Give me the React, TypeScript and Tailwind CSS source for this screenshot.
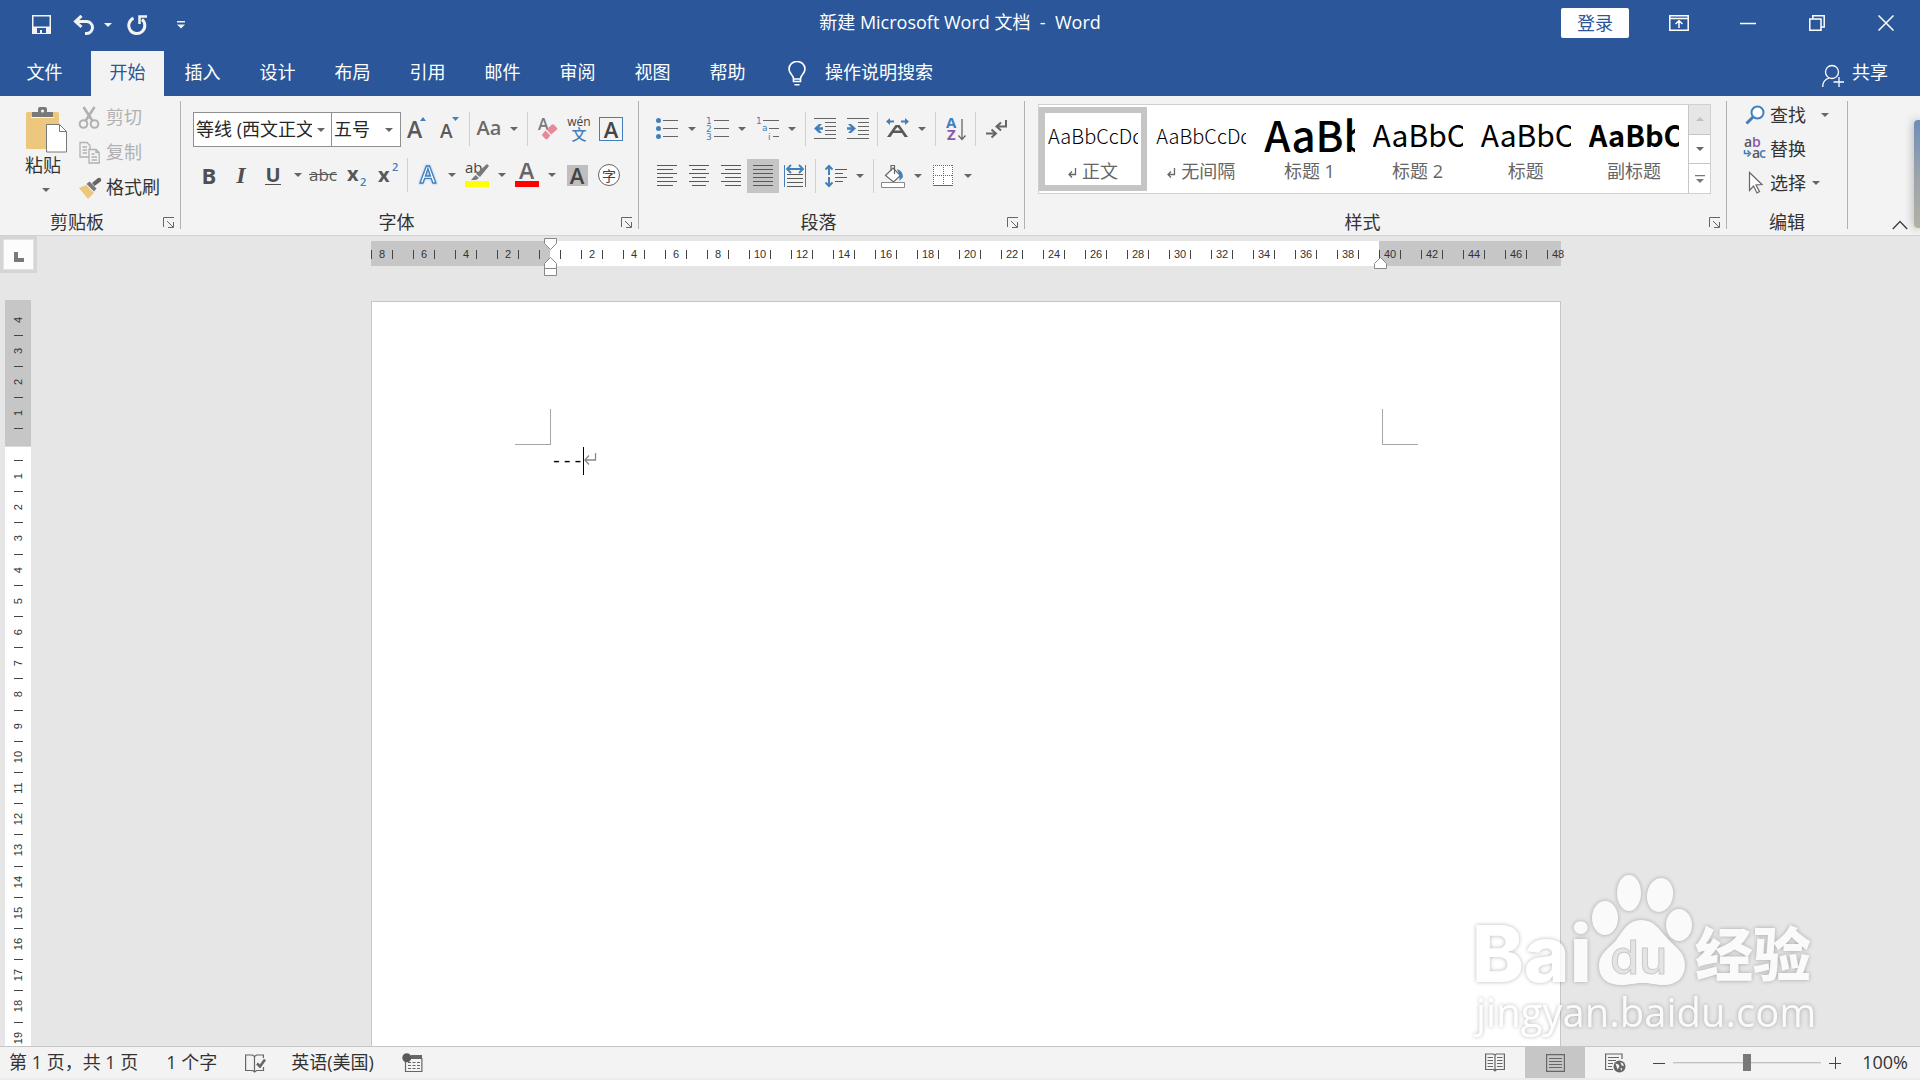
import type { ReactNode } from 'react';

const TABS = ['开始', '插入', '设计', '布局', '引用', '邮件', '审阅', '视图', '帮助'];

const STYLES = [
  { name: '正文', sample: 'AaBbCcDd', mark: true, font: 'text-[20px] leading-[46px] font-light' },
  { name: '无间隔', sample: 'AaBbCcDd', mark: true, font: 'text-[20px] leading-[46px] font-light' },
  { name: '标题 1', sample: 'AaBb', mark: false, font: 'text-[42px] leading-[42px] font-medium' },
  { name: '标题 2', sample: 'AaBbC', mark: false, font: 'text-[30px] leading-[42px] font-normal' },
  { name: '标题', sample: 'AaBbC', mark: false, font: 'text-[30px] leading-[42px] font-normal' },
  { name: '副标题', sample: 'AaBbC', mark: false, font: 'text-[29px] leading-[42px] font-bold' }
];

// one cell per character, every second one carries a number
const RULER_CELLS = Array.from({ length: 57 }, (_, i) => {
  const value = Math.abs(i - 8);
  return i % 2 === 0 && value !== 0 ? String(value) : '';
});

const TOP_MARGIN_LINES = [4, 3, 2, 1];
const BODY_LINES = Array.from({ length: 19 }, (_, i) => i + 1);

interface ToolProps {
  label: string;
  children: ReactNode;
  active?: boolean;
}

function Tool({ label, children, active = false }: ToolProps) {
  return (
    <button
      type="button"
      aria-label={label}
      className={`flex h-[34px] w-8 shrink-0 items-center justify-center ${active ? 'bg-[#c5c5c5]' : ''}`}
    >
      {children}
    </button>
  );
}

function Arrow({ className = 'fill-[#666]' }: { className?: string }) {
  return (
    <svg width="8" height="4" viewBox="0 0 8 4" className={className}>
      <path d="M0 0h8L4 4z" />
    </svg>
  );
}

function Caret({ label }: { label: string }) {
  return (
    <button type="button" aria-label={label} className="flex h-[34px] w-[18px] shrink-0 items-center justify-center">
      <Arrow />
    </button>
  );
}

function Separator() {
  return (
    <span className="flex w-2 shrink-0 justify-center self-stretch">
      <span className="w-px bg-[#cfcfcf]" />
    </span>
  );
}

function Icon({ children, size = 24 }: { children: ReactNode; size?: number }) {
  return (
    <svg width={size} height={size} viewBox="0 0 24 24" fill="none" className="shrink-0">
      {children}
    </svg>
  );
}

interface GroupProps {
  label: string;
  className: string;
  launcher?: boolean;
  children: ReactNode;
}

function Group({ label, className, launcher = true, children }: GroupProps) {
  return (
    <section className={`flex pt-[5px] ${className}`}>
      <div className="flex min-w-0 flex-1 flex-col">
        <div className="h-[108px]">{children}</div>
        <div className="flex h-[26px] items-center">
          <h2 className="flex-1 text-center text-[18px] leading-[24px] text-[#333]">{label}</h2>
          {launcher && (
            <button type="button" aria-label={`${label}设置`} className="w-[26px] pt-px pl-[9px]">
              <svg width="12" height="12" viewBox="0 0 12 12" fill="none" stroke="#666">
                <path d="M.5 10V.5H11M4 4l6 6M10.500 5v5.500H5" />
              </svg>
            </button>
          )}
        </div>
      </div>
      <span className="mb-[6px] w-px bg-[#b1b1b1]" />
    </section>
  );
}

function TitleBar() {
  return (
    <header className="grid h-[51px] grid-cols-[1fr_auto_1fr] text-white">
      <div className="flex items-center pb-[2px] pl-8">
        <button type="button" aria-label="保存">
          <svg width="20" height="20" viewBox="0 0 20 20">
            <path d="M0 0h19v19H0zM1.500 1.500v10h16v-10zM5 13v5h3v-3h2v3h4v-5z" fill="#f3f3f3" fillRule="evenodd" />
          </svg>
        </button>
        <button type="button" aria-label="撤消" className="ml-[21px]">
          <svg width="22" height="20" viewBox="0 0 22 20" fill="none" stroke="#f3f3f3" strokeWidth="3">
            <path d="M3 6.500h10.500a5.700 5.700 0 0 1 0 12H12" />
            <path d="M8.500.8L2.500 6.500l6 5.500" />
          </svg>
        </button>
        <button type="button" aria-label="撤消列表" className="ml-[9px]">
          <Arrow className="fill-[#f3f3f3]" />
        </button>
        <button type="button" aria-label="重复" className="ml-[15px]">
          <svg width="20" height="20" viewBox="0 0 20 20" fill="none" stroke="#f3f3f3" strokeWidth="3">
            <path d="M6.500 3.200a8 8 0 1 0 8.500 1.200" />
            <path d="M20 1.500h-7.500V9" strokeWidth="2.500" />
          </svg>
        </button>
        <button type="button" aria-label="自定义快速访问工具栏" className="ml-[30px]">
          <svg width="8" height="8" viewBox="0 0 8 8" fill="#f3f3f3">
            <path d="M0 0h8v1.500H0zM0 3.500h8l-4 4z" />
          </svg>
        </button>
      </div>
      <h1 className="text-[18px] leading-[44px] whitespace-pre">新建 Microsoft Word 文档  -  Word</h1>
      <div className="flex items-start justify-end">
        <button type="button" className="mt-2 mr-[15px] h-[30px] w-[68px] rounded-xs bg-white text-[18px] leading-[28px] text-[#2b579a]">
          登录
        </button>
        <button type="button" aria-label="功能区显示选项" className="flex h-[46px] w-[69px] items-center justify-center">
          <svg width="20" height="16" viewBox="0 0 20 16" fill="none" stroke="#fff" strokeWidth="1.500">
            <path d="M.8.8h18.400v14.400H.8zM1 3.500h18M10 13V6M6.500 9L10 5.700 13.500 9" />
          </svg>
        </button>
        <button type="button" aria-label="最小化" className="flex h-[46px] w-[69px] items-center justify-center">
          <svg width="16" height="16" viewBox="0 0 16 16" stroke="#fff" strokeWidth="1.500">
            <path d="M0 8.500h16" />
          </svg>
        </button>
        <button type="button" aria-label="向下还原" className="flex h-[46px] w-[69px] items-center justify-center">
          <svg width="16" height="16" viewBox="0 0 16 16" fill="none" stroke="#fff" strokeWidth="1.500">
            <path d="M.8 4h11.200v11.200H.8zM3.800 4V.8h11.400V12H12" />
          </svg>
        </button>
        <button type="button" aria-label="关闭" className="flex h-[46px] w-[69px] items-center justify-center">
          <svg width="16" height="16" viewBox="0 0 16 16" stroke="#fff" strokeWidth="1.500">
            <path d="M.5.500l15 15M15.500.500l-15 15" />
          </svg>
        </button>
      </div>
    </header>
  );
}

function TabRow() {
  return (
    <nav className="flex h-[45px] gap-0.5 text-[18px] leading-[40px] text-white">
      <button type="button" className="w-[89px] pb-1">文件</button>
      {TABS.map((tab, i) => (
        <button key={tab} type="button" className={`w-[73px] pb-1 ${i === 0 ? 'bg-[#f3f3f3] text-[#2b579a]' : ''}`}>
          {tab}
        </button>
      ))}
      <label className="ml-[22px] flex items-center gap-[19px]">
        <svg width="18" height="25" viewBox="0 0 18 25" fill="none" stroke="#fff" strokeWidth="1.600">
          <path d="M5.500 18c0-4-4.500-5-4.500-10a8 7.500 0 0 1 16 0c0 5-4.500 6-4.500 10zM5.500 18v2.500h7V18M6.500 23.700h5" />
        </svg>
        <input aria-label="操作说明搜索" placeholder="操作说明搜索" className="h-full w-[160px] bg-transparent pb-1 placeholder:text-white placeholder:opacity-100" />
      </label>
      <button type="button" className="ml-auto flex items-center gap-2 pr-8 pb-1">
        <svg width="22" height="24" viewBox="0 0 22 24" fill="none" stroke="#fff" strokeWidth="1.300" className="mt-2">
          <circle cx="10" cy="8" r="6.500" />
          <path d="M.7 23c0-5 3-8 6.500-9M17 13v10M11.500 18H22" />
        </svg>
        共享
      </button>
    </nav>
  );
}

function ClipboardGroup() {
  return (
    <Group label="剪贴板" className="w-[181px]">
      <div className="flex">
        <button type="button" className="flex w-[78px] flex-col items-start pt-[6px] pl-[25px] text-[18px] leading-[24px] text-[#333]">
          <svg width="42" height="46" viewBox="0 0 42 46">
            <rect x="1" y="5" width="33" height="37" rx="1.500" fill="#eec77f" />
            <path d="M7 5h6V2q0-2 2-2h5q2 0 2 2v3h6v5H7z" fill="#797979" />
            <circle cx="17.500" cy="4" r="1.600" fill="#f3f3f3" />
            <path d="M6 10.500h23" stroke="#f3f3f3" />
            <path d="M21.500 17.500h13l7 7v20.500h-20z" fill="#fff" stroke="#797979" />
            <path d="M34.500 17.500v7h7" fill="none" stroke="#797979" />
          </svg>
          粘贴
          <span className="mt-[11px] ml-[17px]">
            <Arrow />
          </span>
        </button>
        <div className="-mt-px flex flex-col text-[18px] leading-[35px] text-[#333]">
          <button type="button" disabled className="flex items-center gap-[6px] text-[#b1b1b1]">
            <svg width="22" height="24" viewBox="0 0 22 24" fill="none" stroke="#b1b1b1" strokeWidth="2">
              <circle cx="5.500" cy="18" r="3.800" />
              <circle cx="16.500" cy="18" r="3.800" />
              <path d="M5.500 1l9 14M16.500 1l-9 14" strokeWidth="2.600" />
            </svg>
            剪切
          </button>
          <button type="button" disabled className="flex items-center gap-[6px] text-[#b1b1b1]">
            <svg width="22" height="24" viewBox="0 0 22 24" fill="#f3f3f3" stroke="#b1b1b1" strokeWidth="1.300">
              <path d="M2 1.500h7l3 3V16H2zM4.500 6H9M4.500 9H9M4.500 12H9" />
              <path d="M11 8.500h7l3.200 3V22H11zM18 8.500v3h3M13.500 13h3M13.500 16h5.500M13.500 19h5.500" />
            </svg>
            复制
          </button>
          <button type="button" className="flex items-center gap-[6px]">
            <svg width="24" height="22" viewBox="0 0 24 22" className="-mr-[2px]">
              <path d="M1 11l7-3 8 8-6 6z" fill="#eec77f" />
              <path d="M8.500 7l3-2.500 7 7-2.500 3z" fill="#797979" />
              <path d="M14 6l6-5q2-1 3 1t-1 3l-5.500 4z" fill="#666" />
            </svg>
            格式刷
          </button>
        </div>
      </div>
    </Group>
  );
}

function FontGroup() {
  return (
    <Group label="字体" className="w-[458px]">
      <div className="flex flex-col gap-[12px] pt-[11px] pl-3">
        <div className="flex h-[34px]">
          <div className="flex h-[35px] w-[139px] items-center border border-[#8f8f8f] bg-white">
            <select aria-label="字体" className="h-full w-[118px] appearance-none overflow-hidden pl-[2px] text-[18px] text-[#262626]">
              <option>等线 (西文正文)</option>
            </select>
            <span className="pointer-events-none ml-[5px]">
              <Arrow />
            </span>
          </div>
          <div className="-ml-px flex h-[35px] w-[70px] items-center border border-[#8f8f8f] bg-white">
            <select aria-label="字号" className="h-full w-[53px] appearance-none pl-[2px] text-[18px] text-[#262626]">
              <option>五号</option>
            </select>
            <span className="pointer-events-none">
              <Arrow />
            </span>
          </div>
          <Tool label="增大字号">
            <svg width="22" height="24" viewBox="0 0 22 24" className="[font-family:'Open_Sans',sans-serif] font-semibold">
              <text x="1" y="21" fontSize="23" fill="#595959">A</text>
              <path d="M14 4l3-4 3 4z" fill="#437fbc" />
            </svg>
          </Tool>
          <Tool label="减小字号">
            <svg width="22" height="24" viewBox="0 0 22 24" className="[font-family:'Open_Sans',sans-serif] font-semibold">
              <text x="2" y="21" fontSize="19" fill="#595959">A</text>
              <path d="M14 0h7l-3.500 4z" fill="#437fbc" />
            </svg>
          </Tool>
          <Separator />
          <Tool label="更改大小写">
            <span className="pb-0.5 [font-family:'Open_Sans',sans-serif] text-[20px] font-semibold text-[#6a6a6a]">Aa</span>
          </Tool>
          <Caret label="大小写选项" />
          <Separator />
          <Tool label="清除所有格式">
            <Icon>
              <text x="3" y="13" fontSize="16" fill="#797979" className="[font-family:'Open_Sans',sans-serif] font-semibold">A</text>
              <path d="M11.500 12.500l5.500-5q1-.8 2 .2l3 3.200q.8 1-.2 1.900l-5.600 4.800z" fill="#e5899b" />
              <path d="M10.500 13.500l4.800 5-2.800 3.500q-1 .8-2 0L7.500 19q-.8-1 0-2z" fill="#e5899b" />
            </Icon>
          </Tool>
          <Tool label="拼音指南">
            <span className="flex flex-col items-center leading-none">
              <span className="[font-family:'Open_Sans',sans-serif] text-[12px] leading-[10px] text-[#444]">wén</span>
              <span className="text-[15px] leading-[15px] font-medium text-[#437fbc]">文</span>
            </span>
          </Tool>
          <Tool label="字符边框">
            <span className="flex size-6 items-center justify-center border border-[#437fbc] [font-family:'Open_Sans',sans-serif] text-[22px] leading-[22px] font-semibold text-[#444]">A</span>
          </Tool>
        </div>
        <div className="flex h-[34px] [font-family:'Open_Sans',sans-serif] text-[#505050]">
          <Tool label="加粗">
            <span className="text-[22px] font-bold">B</span>
          </Tool>
          <Tool label="倾斜">
            <span className="[font-family:'Liberation_Serif',serif] text-[24px] font-bold italic">I</span>
          </Tool>
          <Tool label="下划线">
            <span className="border-b border-[#505050] text-[20px] leading-[18px] font-bold">U</span>
          </Tool>
          <Caret label="下划线样式" />
          <Tool label="删除线">
            <span className="text-[17px] text-[#595959] line-through">abc</span>
          </Tool>
          <Tool label="下标">
            <Icon>
              <text x="4" y="18" fontSize="20" fill="#595959" className="font-bold">x</text>
              <text x="17" y="23" fontSize="11" fill="#437fbc" className="font-semibold">2</text>
            </Icon>
          </Tool>
          <Tool label="上标">
            <Icon>
              <text x="3" y="19" fontSize="20" fill="#595959" className="font-bold">x</text>
              <text x="17" y="8" fontSize="11" fill="#437fbc" className="font-semibold">2</text>
            </Icon>
          </Tool>
          <Separator />
          <Tool label="文本效果和版式">
            <Icon>
              <text x="5" y="20" fontSize="24" fill="#fff" stroke="#437fbc" strokeWidth="1.300" className="font-semibold [filter:drop-shadow(0_0_1px_#7db4e6)]">A</text>
            </Icon>
          </Tool>
          <Caret label="文本效果选项" />
          <Tool label="文本突出显示颜色">
            <Icon>
              <text x="0" y="10" fontSize="15" fill="#444">ab</text>
              <path d="M22 1l2 2-9 11-4-3zM10.500 12l3.500 3-3 2H6z" fill="#797979" />
              <path d="M0 18h24v6H0z" fill="#ff0" />
            </Icon>
          </Tool>
          <Caret label="突出显示选项" />
          <Tool label="字体颜色">
            <Icon>
              <text x="4" y="16" fontSize="23" fill="#666" className="font-semibold">A</text>
              <path d="M0 18h24v6H0z" fill="red" />
            </Icon>
          </Tool>
          <Caret label="字体颜色选项" />
          <Tool label="字符底纹">
            <span className="flex size-[21px] items-center justify-center bg-[#bfbfbf] text-[22px] leading-[21px] font-semibold text-[#444]">A</span>
          </Tool>
          <Tool label="带圈字符">
            <span className="flex size-[22px] items-center justify-center rounded-full border border-[#666] bg-white [font-family:'Noto_Sans_CJK_SC',sans-serif] text-[14px] leading-none text-[#444]">字</span>
          </Tool>
        </div>
      </div>
    </Group>
  );
}

function ParagraphGroup() {
  return (
    <Group label="段落" className="w-[386px]">
      <div className="flex flex-col gap-[13px] pt-[11px] pl-3">
        <div className="flex h-[34px]">
          <Tool label="项目符号">
            <Icon>
              <path d="M8 3.500h15M8 11.500h15M8 19.500h15" stroke="#666" />
              <path d="M1 3.500a2.500 2.500 0 1 1 5 0 2.500 2.500 0 0 1-5 0M1 11.500a2.500 2.500 0 1 1 5 0 2.500 2.500 0 0 1-5 0M1 19.500a2.500 2.500 0 1 1 5 0 2.500 2.500 0 0 1-5 0" fill="#437fbc" />
            </Icon>
          </Tool>
          <Caret label="项目符号库" />
          <Tool label="编号">
            <Icon>
              <path d="M9 3.500h15M9 11.500h15M9 19.500h15" stroke="#666" />
              <g fill="#437fbc" fontSize="9" className="[font-family:'DejaVu_Sans',sans-serif]">
                <text x="1" y="7">1</text>
                <text x="1" y="15">2</text>
                <text x="1" y="23">3</text>
              </g>
            </Icon>
          </Tool>
          <Caret label="编号库" />
          <Tool label="多级列表">
            <Icon>
              <path d="M8 3.500h16M14 11.500h10M18 19.500h6" stroke="#666" />
              <g fill="#437fbc" fontSize="9" className="[font-family:'DejaVu_Sans',sans-serif]">
                <text x="1" y="7">1</text>
                <text x="7" y="14">a</text>
                <text x="13" y="23">i</text>
              </g>
            </Icon>
          </Tool>
          <Caret label="多级列表库" />
          <Separator />
          <Tool label="减少缩进量">
            <Icon>
              <path d="M1 1.500h22M12 5.500h11M12 9.500h11M12 13.500h11M12 17.500h11M1 21.500h22" stroke="#666" />
              <path d="M1 11.500L6 7h3l-3 3.200h4v2.600H6L9 16H6z" fill="#437fbc" />
            </Icon>
          </Tool>
          <Tool label="增加缩进量">
            <Icon>
              <path d="M2 1.500h22M13 5.500h11M13 9.500h11M13 13.500h11M13 17.500h11M2 21.500h22" stroke="#666" />
              <path d="M11 11.500L6 7H3l3 3.200H2v2.600h4L3 16h3z" fill="#437fbc" />
            </Icon>
          </Tool>
          <Separator />
          <Tool label="中文版式">
            <Icon>
              <path d="M1 4.500L5 1v2.500h4v2H5V8zM24 4.500L20 1v2.500h-4v2h4V8z" fill="#437fbc" />
              <path d="M2 20L10.500 8h4L23 20h-3.500l-2.600-4H8.100l-2.600 4zM9.500 13.500h6L12.500 10z" fill="#595959" />
            </Icon>
          </Tool>
          <Caret label="中文版式选项" />
          <Separator />
          <Tool label="排序">
            <Icon>
              <g fontSize="15" className="[font-family:'Open_Sans',sans-serif] font-bold">
                <text x="3" y="11" fill="#437fbc">A</text>
                <text x="4" y="23" fill="#8a58ad">Z</text>
              </g>
              <path d="M19 2v20M15.500 18.500L19 22.500l3.500-4" stroke="#666" strokeWidth="1.300" />
            </Icon>
          </Tool>
          <Separator />
          <Tool label="显示/隐藏编辑标记">
            <Icon>
              <path d="M23 3v6.500h-9M18 5.500l-4.500 4 4.500 4M3 16.500h9M8.500 12.500l4.500 4-4.500 4" stroke="#666" strokeWidth="2" />
            </Icon>
          </Tool>
        </div>
        <div className="flex h-[34px]">
          <Tool label="左对齐">
            <Icon>
              <path d="M2 1.500h20M2 5.500h16M2 9.500h20M2 13.500h16M2 17.500h20M2 21.500h16" stroke="#595959" />
            </Icon>
          </Tool>
          <Tool label="居中">
            <Icon>
              <path d="M2 1.500h20M5 5.500h14M2 9.500h20M5 13.500h14M2 17.500h20M5 21.500h14" stroke="#595959" />
            </Icon>
          </Tool>
          <Tool label="右对齐">
            <Icon>
              <path d="M2 1.500h20M6 5.500h16M2 9.500h20M6 13.500h16M2 17.500h20M6 21.500h16" stroke="#595959" />
            </Icon>
          </Tool>
          <Tool label="两端对齐" active>
            <Icon>
              <path d="M2 1.500h20M2 5.500h20M2 9.500h20M2 13.500h20M2 17.500h20M2 21.500h20" stroke="#595959" />
            </Icon>
          </Tool>
          <Tool label="分散对齐">
            <Icon>
              <path d="M4 10.500h16M4 14.500h16M4 18.500h16M4 22.500h16" stroke="#595959" />
              <path d="M1.500 1v22M22.500 1v22" stroke="#437fbc" />
              <path d="M4 5h16M8 1L4 5l4 4M16 1l4 4-4 4" stroke="#437fbc" strokeWidth="1.800" />
            </Icon>
          </Tool>
          <Separator />
          <Tool label="行和段落间距">
            <Icon>
              <path d="M12 5.500h12M12 9.500h8M12 13.500h12M12 17.500h8" stroke="#595959" />
              <path d="M6 2v9M2.500 5.500L6 2l3.500 3.500M6 13v9M2.500 18.500L6 22l3.500-3.500" stroke="#437fbc" strokeWidth="2" />
            </Icon>
          </Tool>
          <Caret label="间距选项" />
          <Separator />
          <Tool label="底纹">
            <Icon>
              <path d="M4.500 11.500L12 4l7.500 7.500-7 6.500z" fill="#fff" stroke="#666" strokeWidth="1.200" />
              <path d="M10 7V1.500h3.500V10" stroke="#666" strokeWidth="1.200" />
              <path d="M16 5q6 2 6 8l-3.500 4v-6z" fill="#437fbc" />
              <path d="M.5 18.500h23v5H.5z" fill="#fff" stroke="#888" />
            </Icon>
          </Tool>
          <Caret label="底纹颜色" />
          <Tool label="边框">
            <Icon>
              <path d="M2 1h20v20H2z" fill="#fff" />
              <path d="M2 1.500h20M2 11.500h20M2.500 1v20M12.500 1v20M21.500 1v20" stroke="#666" strokeDasharray="1 1" />
              <path d="M2 21.500h20" stroke="#666" />
            </Icon>
          </Tool>
          <Caret label="边框选项" />
        </div>
      </div>
    </Group>
  );
}

function StylesGroup() {
  return (
    <Group label="样式" className="min-w-0 flex-1">
      <div className="pt-[3px] pr-[15px] pl-[13px]">
        <div className="flex h-[90px] border border-[#d0d0d0] bg-white">
          <div className="flex min-w-0 flex-1 items-center">
            {STYLES.map((style, i) => (
              <button
                key={style.name}
                type="button"
                className={`flex h-[84px] min-w-0 flex-1 flex-col border-[6px] px-[3px] ${i === 0 ? 'border-[#c5c5c5]' : 'border-transparent'}`}
              >
                <span className={`h-[46px] w-full overflow-hidden text-left [font-family:'Noto_Sans_CJK_SC',sans-serif] text-black ${style.font}`}>
                  {style.sample}
                </span>
                <span className="flex w-full items-center justify-center gap-[5px] text-[18px] leading-[24px] whitespace-nowrap text-[#666]">
                  {style.mark && (
                    <svg width="9" height="10" viewBox="0 0 9 10" fill="none" stroke="#666" strokeWidth="1.300" className="mt-1">
                      <path d="M7.500 0v6.500H1M4 3.500l-3 3 3 3" />
                    </svg>
                  )}
                  {style.name}
                </span>
              </button>
            ))}
          </div>
          <div className="flex w-[22px] flex-col divide-y divide-[#c6c6c6] border-l border-[#c6c6c6]">
            <button type="button" aria-label="上一行" className="flex flex-1 items-center justify-center bg-[#e6e6e6]">
              <svg width="8" height="4" viewBox="0 0 8 4" fill="#c0c0c0">
                <path d="M0 4h8L4 0z" />
              </svg>
            </button>
            <button type="button" aria-label="下一行" className="flex flex-1 items-center justify-center">
              <Arrow />
            </button>
            <button type="button" aria-label="其他样式" className="flex flex-1 items-center justify-center">
              <svg width="10" height="8" viewBox="0 0 10 8" fill="#797979">
                <path d="M0 0h10v1.200H0zM1 4h8L5 8z" />
              </svg>
            </button>
          </div>
        </div>
      </div>
    </Group>
  );
}

function EditGroup() {
  return (
    <Group label="编辑" className="w-[121px]" launcher={false}>
      <div className="-mt-[3px] flex flex-col items-start pl-4 text-[18px] leading-[34px] text-[#333]">
        <button type="button" className="flex items-center gap-[3px]">
          <Icon>
            <circle cx="14.500" cy="9.500" r="6" fill="#fff" stroke="#437fbc" strokeWidth="2" />
            <path d="M10 14l-6.500 6.500" stroke="#437fbc" strokeWidth="3" />
          </Icon>
          查找
          <span className="ml-3">
            <Arrow />
          </span>
        </button>
        <button type="button" className="flex items-center gap-[3px]">
          <Icon>
            <g fontSize="14" className="[font-family:'Open_Sans',sans-serif] font-semibold">
              <text x="1" y="10" fill="#595959">a</text>
              <text x="9" y="10" fill="#8a58ad">b</text>
              <text x="9" y="21" fill="#595959">a</text>
              <text x="16" y="21" fill="#437fbc">c</text>
            </g>
            <path d="M1.500 13v3.500H6M4.500 13.500l3 3-3 3" stroke="#437fbc" strokeWidth="1.500" />
          </Icon>
          替换
        </button>
        <button type="button" className="flex items-center gap-[3px]">
          <Icon>
            <path d="M6.500 1.500v18l4-4.500 3.500 7 2.500-1.500-3.500-6.500 6-.5z" fill="#fff" stroke="#666" strokeWidth="1.200" />
          </Icon>
          选择
          <span className="ml-[3px]">
            <Arrow />
          </span>
        </button>
      </div>
    </Group>
  );
}

function Ribbon() {
  return (
    <div className="relative flex h-[140px] border-b border-[#d2d2d2] bg-[#f3f3f3]">
      <ClipboardGroup />
      <FontGroup />
      <ParagraphGroup />
      <StylesGroup />
      <EditGroup />
      <div className="flex w-[72px] items-end justify-end pr-3 pb-[5px]">
        <button type="button" aria-label="折叠功能区">
          <svg width="16" height="10" viewBox="0 0 16 10" fill="none" stroke="#444" strokeWidth="1.500">
            <path d="M.8 9L8 1.500 15.200 9" />
          </svg>
        </button>
      </div>
      {/* floating picture preview that peeks in from the screen edge */}
      <div className="absolute top-6 right-0 h-[108px] w-[6px] rounded-l-sm bg-linear-to-b from-[#6f8db8] via-[#9aa3ad] to-[#b3b0a2] shadow-[0_0_10px_rgba(0,0,0,0.35)]" />
    </div>
  );
}

function IndentMarker({ className, path, height }: { className: string; path: string; height: number }) {
  return (
    <svg width="13" height={height} viewBox={`0 0 13 ${height}`} className={`absolute ${className}`} fill="#fff" stroke="#888">
      <path d={path} />
    </svg>
  );
}

function HorizontalRuler() {
  return (
    <div className="relative mt-[5px] h-[25px] w-[1190px] max-w-full shrink-0 bg-[#c6c6c6] [font-family:'Liberation_Sans',sans-serif] text-[11px] text-[#333]">
      <div className="absolute inset-y-0 left-[179px] w-[829px] bg-white" />
      <div className="relative flex h-full items-center pt-[2px]">
        {RULER_CELLS.map((value, i) => (
          <span key={i} className="flex h-[9px] w-[21px] shrink-0 items-center justify-center border-l border-[#444] leading-none">
            {value}
          </span>
        ))}
      </div>
      <IndentMarker className="-top-[3px] left-[173px]" height={12} path="M.5.500h12v5l-6 6-6-6z" />
      <IndentMarker className="top-[16px] left-[173px]" height={19} path="M.5 18.500v-12l6-6 6 6v12zM.5 11.500h12" />
      <IndentMarker className="top-[16px] left-[1003px]" height={12} path="M.5 11.500v-5l6-6 6 6v5z" />
    </div>
  );
}

function VerticalRuler() {
  return (
    <div className="flex w-[37px] shrink-0 flex-col">
      <button type="button" aria-label="制表符" className="flex h-[37px] w-[37px] shrink-0 items-center justify-center bg-[#d5d5d5]">
        <span className="flex size-[31px] items-center justify-center border border-[#e3e3e3] bg-[#fcfcfc]">
          <span className="mt-1 size-[10px] border-b-4 border-l-4 border-[#797979]" />
        </span>
      </button>
      <div className="mt-[27px] ml-[5px] min-h-0 w-[26px] flex-1 bg-white [font-family:'Liberation_Sans',sans-serif] text-[11px] text-[#333]">
        <div className="flex h-[147px] flex-col border-b border-[#dadada] bg-[#c6c6c6] pt-[5px]">
          {TOP_MARGIN_LINES.map(line => (
            <span key={line} className="flex h-[31px] w-full flex-col items-center">
              <span className="flex flex-1 -rotate-90 items-center leading-none">{line}</span>
              <span className="h-px w-[9px] bg-[#444]" />
            </span>
          ))}
        </div>
        <div className="flex h-[606px] flex-col pt-[13px]">
          {BODY_LINES.map(line => (
            <span key={line} className="flex min-h-0 w-full flex-1 flex-col items-center">
              <span className="h-px w-[9px] bg-[#444]" />
              <span className="flex flex-1 -rotate-90 items-center leading-none">{line}</span>
            </span>
          ))}
        </div>
      </div>
    </div>
  );
}

function Page() {
  return (
    <article className="mt-[35px] w-[1190px] max-w-full flex-1 border border-b-0 border-[#c6c6c6] bg-white pt-[107px]">
      <div className="flex justify-between pr-[142px] pl-[143px]">
        <span className="size-9 border-r border-b border-[#a6a6a6]" />
        <span className="size-9 border-b border-l border-[#a6a6a6]" />
      </div>
      <p className="mt-[2px] flex h-[28px] items-center pl-[179px] [font-family:'Liberation_Mono',monospace] text-[18px] text-black">
        <span className="pt-[2px]">---</span>
        <span className="h-full w-px bg-black" />
        <svg width="13" height="12" viewBox="0 0 13 12" fill="none" stroke="#888" strokeWidth="1.300" className="-mt-1">
          <path d="M11.500 0v7H1M5 2.500L.8 7 5 11.500" />
        </svg>
      </p>
    </article>
  );
}

function Watermark() {
  return (
    <svg
      width="370"
      height="186"
      viewBox="0 0 370 186"
      fill="#fff"
      className="pointer-events-none absolute right-[90px] bottom-0 opacity-80 [filter:drop-shadow(0_0_2px_rgba(0,0,0,0.35))]"
    >
      <text x="12" y="122" fontSize="78" className="[font-family:Inter,sans-serif] font-extrabold">Bai</text>
      <ellipse cx="145" cy="58" rx="13" ry="17" />
      <ellipse cx="169" cy="33" rx="12" ry="18" />
      <ellipse cx="200" cy="35" rx="13" ry="17" transform="rotate(10 200 35)" />
      <ellipse cx="219" cy="65" rx="13" ry="16" />
      <path d="M181 60c-12 0-17 9-24 19-7 9-18 14-18 27 0 13 10 19 22 19 9 0 13-2 22-2 8 0 12 2 21 2 12 0 21-7 21-20 0-13-10-18-18-27-8-9-13-18-26-18z" />
      <text x="150" y="114" fontSize="47" fill="#e4e4e4" stroke="#c4c4c4" strokeWidth="1" className="[font-family:Inter,sans-serif] font-medium">du</text>
      <text x="235" y="116" fontSize="58" className="[font-family:'Noto_Sans_CJK_SC',sans-serif] font-black">经验</text>
      <text x="16" y="167" fontSize="40" className="[font-family:'Open_Sans',sans-serif] font-medium">jingyan.baidu.com</text>
    </svg>
  );
}

function Workspace() {
  return (
    <main className="relative flex min-h-0 flex-1 overflow-hidden bg-[#e6e6e6] pr-[25px]">
      <VerticalRuler />
      <div className="flex min-w-0 flex-1 flex-col items-center">
        <HorizontalRuler />
        <Page />
      </div>
      <Watermark />
    </main>
  );
}

function StatusBar() {
  return (
    <footer className="flex h-[34px] shrink-0 items-stretch border-t border-b-2 border-t-[#c6c6c6] border-b-[#ececec] bg-[#f3f3f3] pl-[9px] text-[18px] leading-[31px] text-[#333]">
      <button type="button">第 1 页，共 1 页</button>
      <button type="button" className="ml-7">1 个字</button>
      <button type="button" aria-label="校对" className="ml-7 flex items-center">
        <svg width="21" height="20" viewBox="0 0 21 20" fill="none" stroke="#666" strokeWidth="1.200">
          <path d="M9.500 3.500L7.500 2H.6v15.500h7l2 1.500 2-1.500h6.900V14M9.500 3.500V19M9.500 3.500l2-1.500h6.900v3" />
          <path d="M12 10.500l3 3 5-7" strokeWidth="2.600" />
        </svg>
      </button>
      <button type="button" className="ml-[25px]">英语(美国)</button>
      <button type="button" aria-label="宏录制" className="ml-7 flex items-center">
        <svg width="21" height="20" viewBox="0 0 21 20" fill="none" stroke="#666" strokeWidth="1.200">
          <path d="M3.500 9v9.500h16.400V5" />
          <path d="M9 4h11" strokeWidth="4" />
          <path d="M6 9.500h12M6 12.500h12M6 15.500h12" strokeDasharray="3 1.500" />
          <circle cx="4.800" cy="4.800" r="4.500" fill="#595959" stroke="none" />
        </svg>
      </button>

      <div className="ml-auto flex items-stretch">
        <button type="button" aria-label="阅读视图" className="flex w-[60px] items-center justify-center">
          <svg width="20" height="19" viewBox="0 0 20 19" fill="none" stroke="#666" strokeWidth="1.200">
            <path d="M10 2L8.500 1H.6v15.500h8L10 18l1.500-1.500h7.900V1h-8zM10 2v16M2.500 4.500H8M2.500 7.500H8M2.500 10.500H8M2.500 13.500H8M12 4.500h5.500M12 7.500h5.500M12 10.500h5.500M12 13.500h5.500" />
          </svg>
        </button>
        <button type="button" aria-label="页面视图" className="flex w-[60px] items-center justify-center bg-[#c6c6c6]">
          <svg width="19" height="18" viewBox="0 0 19 18" fill="none" stroke="#666" strokeWidth="1.200">
            <path d="M.6.600h17.800v16.800H.6zM3 4.500h13M3 7.500h13M3 10.500h13M3 13.500h13" />
          </svg>
        </button>
        <button type="button" aria-label="Web 版式视图" className="flex w-[60px] items-center justify-center">
          <svg width="21" height="20" viewBox="0 0 21 20" fill="none" stroke="#666" strokeWidth="1.200">
            <path d="M8 16.500H.6V1h16.400v5M3 4.500h11M3 7.500h8M3 10.500h5M3 13.500h4" />
            <circle cx="14.500" cy="13.500" r="6" fill="#666" stroke="none" />
            <path d="M10.500 10.500l3 1 1 2-2 3zM15.500 9l2.500 1.500 1 2.500-2.500-.5zM15.500 15l2 .5-1.500 2.500z" fill="#f3f3f3" stroke="none" />
          </svg>
        </button>
        <button type="button" aria-label="缩小" className="ml-2 flex items-center">
          <svg width="12" height="12" viewBox="0 0 12 12" stroke="#444">
            <path d="M0 6.500h12" />
          </svg>
        </button>
        <input
          type="range"
          aria-label="显示比例"
          min={0}
          max={100}
          defaultValue={50}
          className="mx-2 my-auto h-[17px] w-[148px] appearance-none bg-linear-to-b from-transparent from-[8px] via-[#b1b1b1] via-[8px] to-transparent to-[10px] [&::-webkit-slider-runnable-track]:h-[17px] [&::-webkit-slider-thumb]:h-[17px] [&::-webkit-slider-thumb]:w-2 [&::-webkit-slider-thumb]:appearance-none [&::-webkit-slider-thumb]:bg-[#797979]"
        />
        <button type="button" aria-label="放大" className="flex items-center">
          <svg width="12" height="12" viewBox="0 0 12 12" stroke="#444">
            <path d="M0 6.500h12M6.500 0v12" />
          </svg>
        </button>
        <button type="button" className="w-[79px] pr-3 text-right">100%</button>
      </div>
    </footer>
  );
}

export default function App() {
  return (
    <div className="flex h-screen flex-col overflow-hidden bg-[#2b579a] [font-family:'Open_Sans','Noto_Sans_CJK_SC',sans-serif]">
      <TitleBar />
      <TabRow />
      <Ribbon />
      <Workspace />
      <StatusBar />
    </div>
  );
}
